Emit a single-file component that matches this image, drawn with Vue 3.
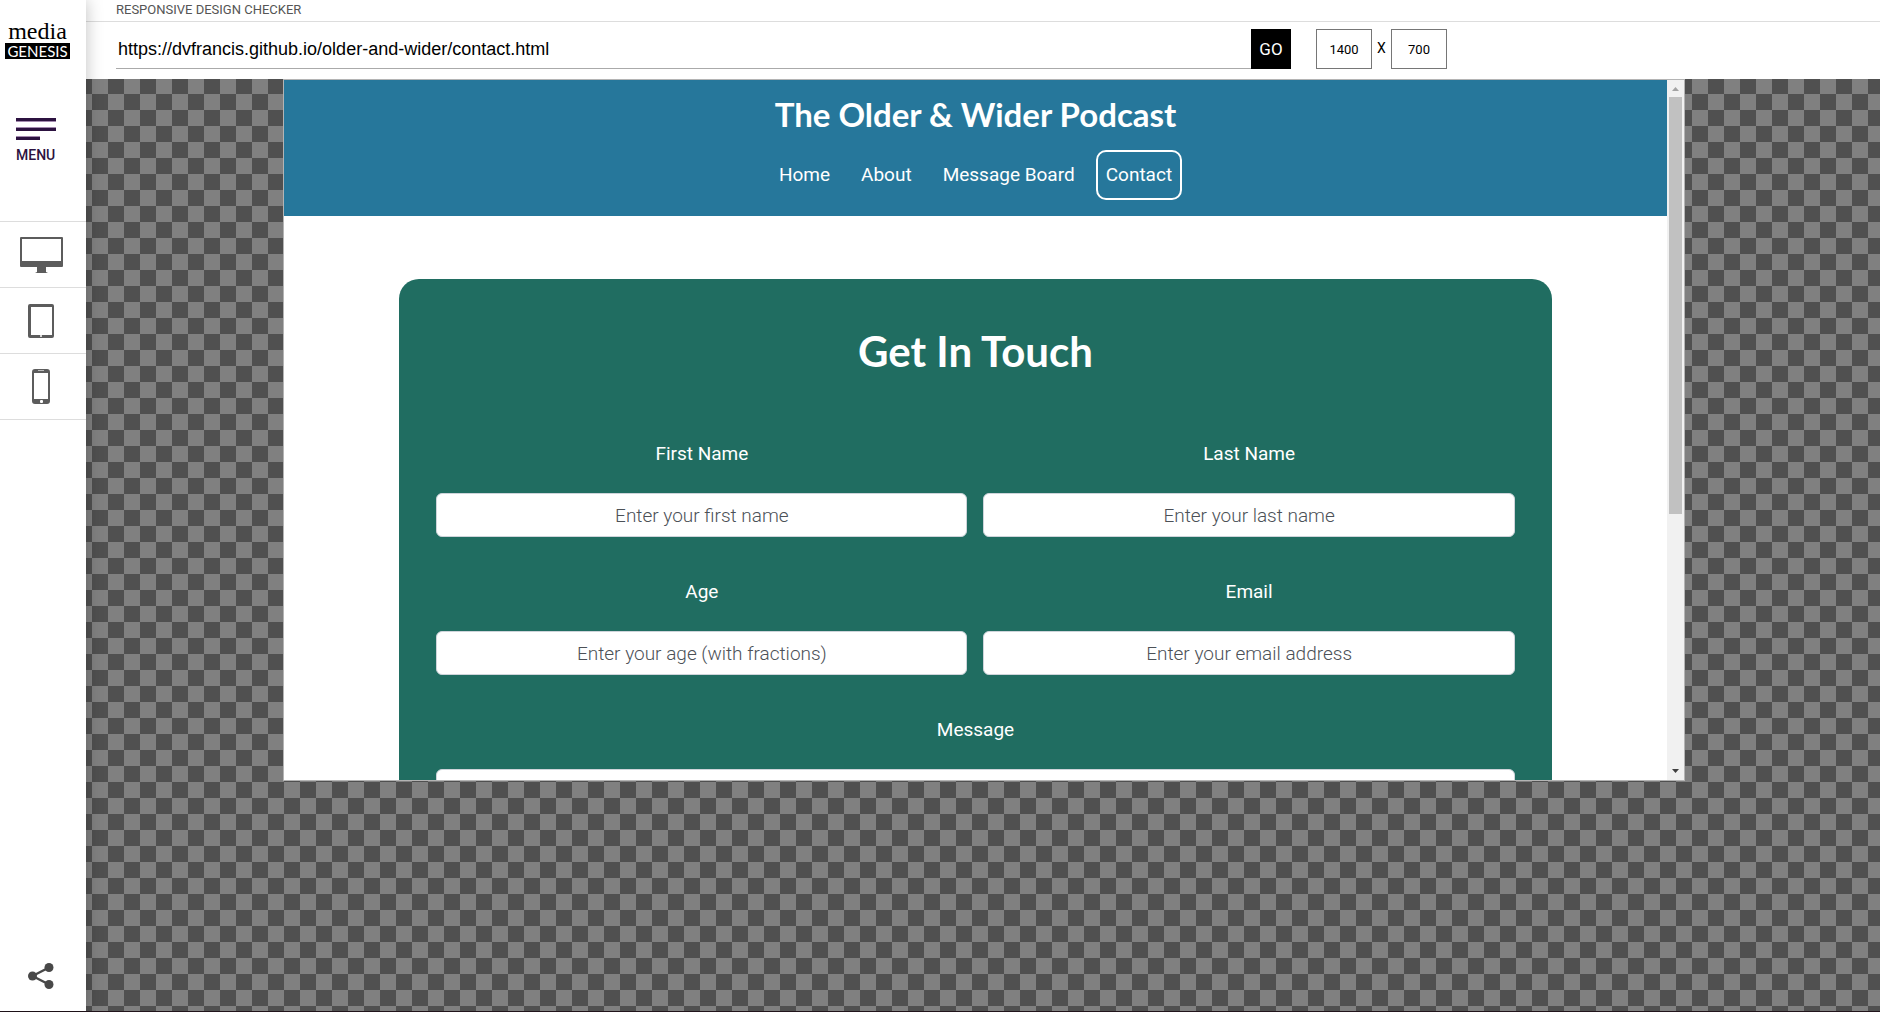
<script setup>
import { ref } from 'vue'

const url = ref('https://dvfrancis.github.io/older-and-wider/contact.html')
const viewWidth = ref('1400')
const viewHeight = ref('700')

const links = ['Home', 'About', 'Message Board', 'Contact']
const current = 'Contact'

const fields = [
  { id: 'first-name', label: 'First Name', type: 'text', hint: 'Enter your first name' },
  { id: 'last-name', label: 'Last Name', type: 'text', hint: 'Enter your last name' },
  { id: 'age', label: 'Age', type: 'text', hint: 'Enter your age (with fractions)' },
  { id: 'email', label: 'Email', type: 'email', hint: 'Enter your email address' },
]
</script>

<template>
  <div class="page">
    <aside class="sidebar">
      <a class="logo" href="#" aria-label="Media Genesis">
        <span class="logo-top">media</span>
        <span class="logo-bottom">GENESIS</span>
      </a>
      <button class="menu" type="button">
        <svg width="40" height="22" viewBox="0 0 40 22" aria-hidden="true">
          <path fill="#2c1240" d="M0 0h40v3H0zM0 10h40v3H0zM0 19h24v3H0z" />
          <path fill="#a48bb0" d="M0 3h40v1H0zM0 9h40v1H0zM0 18h24v1H0z" />
        </svg>
        <span>MENU</span>
      </button>
      <nav class="devices" aria-label="Devices">
        <button type="button" aria-label="Desktop">
          <svg width="44" height="36" viewBox="0 0 44 36">
            <path fill="#5c5c5c" fill-rule="evenodd" d="M1 0h41a1 1 0 0 1 1 1v28a1 1 0 0 1-1 1H26v5l2 1H15l2-1v-5H1a1 1 0 0 1-1-1V1a1 1 0 0 1 1-1zM2 2v22h39V2z" />
          </svg>
        </button>
        <button type="button" aria-label="Tablet">
          <svg width="44" height="34" viewBox="0 0 44 34">
            <path fill="#5c5c5c" fill-rule="evenodd" d="M10 0h22a2 2 0 0 1 2 2v30a2 2 0 0 1-2 2H10a2 2 0 0 1-2-2V2a2 2 0 0 1 2-2zM11 3v28h21V3z" />
            <circle cx="21" cy="32" r="1" fill="#fff" />
          </svg>
        </button>
        <button type="button" aria-label="Phone">
          <svg width="44" height="36" viewBox="0 0 44 36">
            <path fill="#5c5c5c" fill-rule="evenodd" d="M15 0h12a3 3 0 0 1 3 3v29a3 3 0 0 1-3 3H15a3 3 0 0 1-3-3V3a3 3 0 0 1 3-3zM14 4v26h14V4z" />
            <path fill="#bbb" d="M18 1h6v1h-6z" />
            <rect x="20" y="31" width="3" height="3" rx="1" fill="#fff" />
          </svg>
        </button>
      </nav>
      <button class="share" type="button" aria-label="Share">
        <svg width="26" height="26" viewBox="0 0 26 26">
          <path d="M4.500 13 21 4.500M4.500 13 21 21.500" stroke="#484848" stroke-width="2.500" fill="none" />
          <g fill="#484848"><circle cx="4.500" cy="13" r="4.500" /><circle cx="21" cy="4.500" r="4.500" /><circle cx="21" cy="21.500" r="4.500" /></g>
        </svg>
      </button>
    </aside>

    <div class="workspace">
      <header class="toolbar">
        <h1>RESPONSIVE DESIGN CHECKER</h1>
        <form class="controls" @submit.prevent>
          <input v-model="url" class="url" type="text" aria-label="Website address" />
          <button class="go" type="submit">GO</button>
          <input v-model="viewWidth" class="size" type="text" aria-label="Width" />
          <span class="times">X</span>
          <input v-model="viewHeight" class="size" type="text" aria-label="Height" />
        </form>
      </header>

      <main class="canvas">
        <section class="preview">
          <div class="site">
            <header class="site-header">
              <h2>The Older &amp; Wider Podcast</h2>
              <nav>
                <a v-for="link in links" :key="link" href="#" :class="{ current: link === current }">{{ link }}</a>
              </nav>
            </header>
            <form class="card" @submit.prevent>
              <h3>Get In Touch</h3>
              <div class="grid">
                <div v-for="f in fields" :key="f.id" class="field">
                  <label :for="f.id">{{ f.label }}</label>
                  <input :id="f.id" :type="f.type" :placeholder="f.hint" />
                </div>
                <div class="field wide">
                  <label for="message">Message</label>
                  <textarea id="message" rows="5"></textarea>
                </div>
              </div>
            </form>
          </div>
          <div class="scrollbar" aria-hidden="true">
            <svg width="17" height="17" viewBox="0 0 17 17"><path d="M5 11h7L8.500 7z" fill="#a3a3a3" /></svg>
            <div class="thumb"></div>
            <svg width="17" height="17" viewBox="0 0 17 17"><path d="M5 6h7L8.500 10z" fill="#404040" /></svg>
          </div>
        </section>
      </main>
    </div>
  </div>
</template>

<style>
body {
  margin: 0;
}
</style>

<style scoped>
* {
  box-sizing: border-box;
}

button {
  margin: 0;
  padding: 0;
  border: 0;
  background: none;
  font: inherit;
}

input,
textarea {
  margin: 0;
  border-radius: 0;
  outline: none;
}

svg {
  display: block;
}

.page {
  display: flex;
  min-height: 100vh;
  border-bottom: 1px solid #21141b;
  font-family: Roboto, "Liberation Sans", sans-serif;
}

.sidebar {
  position: relative;
  z-index: 1;
  display: flex;
  flex: 0 0 86px;
  flex-direction: column;
  padding: 19px 0 22px;
  background: #fff;
  box-shadow: 0 0 16px rgba(0, 0, 0, 0.25);
}

.logo {
  display: flex;
  flex-direction: column;
  width: 65px;
  margin-left: 5px;
  color: #000;
  text-align: center;
  text-decoration: none;
}

.logo-top {
  font: 24px/24px "Liberation Serif", serif;
}

.logo-bottom {
  background: #000;
  color: #fff;
  font: 15px/16px Lato, sans-serif;
}

.menu {
  display: flex;
  flex-direction: column;
  gap: 6px;
  align-self: flex-start;
  margin: 59px 0 0 16px;
  color: #2c1240;
  font-size: 14px;
  font-weight: 500;
  line-height: 18px;
  text-align: left;
}

.devices {
  display: flex;
  flex-direction: column;
  margin-top: 57px;
  border-top: 1px solid #ddd;
}

.devices button {
  display: flex;
  align-items: center;
  justify-content: center;
  height: 66px;
  padding-right: 2px;
  border-bottom: 1px solid #ddd;
}

.share {
  align-self: flex-start;
  margin: auto 0 0 28px;
}

.workspace {
  display: flex;
  flex: 1;
  flex-direction: column;
  min-width: 0;
}

.toolbar {
  height: 79px;
  background: #fff;
}

h1 {
  margin: 0;
  padding: 0 30px 2px;
  border-bottom: 1px solid #ddd;
  color: #555;
  font-size: 13px;
  font-weight: 400;
  line-height: 19px;
}

.controls {
  display: flex;
  padding: 7px 30px 0;
}

.url {
  flex: 0 1 1135px;
  min-width: 0;
  height: 40px;
  padding: 2px 2px 0;
  border: 0;
  border-bottom: 1px solid #aaa;
  background: #fff;
  color: #000;
  font: 18px "Liberation Sans", Arial, sans-serif;
}

.go {
  flex: none;
  width: 40px;
  height: 40px;
  margin-right: 25px;
  background: #000;
  color: #fff;
  font-size: 17px;
}

.size {
  width: 56px;
  height: 40px;
  padding: 0;
  border: 1px solid #767676;
  color: #000;
  font: 13px Roboto, sans-serif;
  text-align: center;
}

.times {
  width: 19px;
  font-size: 14px;
  line-height: 38px;
  text-align: center;
}

.canvas {
  flex: 1;
  padding-left: 2px;
  background: repeating-conic-gradient(#808080 0 25%, #505050 0 50%) -10px -1px / 32px 32px;
}

.preview {
  display: flex;
  max-width: 1402px;
  height: 702px;
  margin: 0 auto;
  overflow: hidden;
  border: 1px solid #b4b4b4;
  background: #fff;
}

.site {
  flex: 1;
  min-width: 0;
  overflow: hidden;
  font-family: Roboto, sans-serif;
  font-size: 19px;
  line-height: 30px;
  text-align: center;
}

.site-header {
  padding: 14px 0 16px;
  background: #26779b;
  color: #fff;
}

h2 {
  margin: 0 0 16px;
  font: 700 33px/40px Lato, sans-serif;
}

.site-header nav {
  display: flex;
  justify-content: center;
  gap: 11px;
}

.site-header a {
  padding: 8px;
  border: 2px solid transparent;
  border-radius: 10px;
  color: #fff;
  text-decoration: none;
}

.site-header .current {
  border-color: #fff;
}

.card {
  width: 83.333%;
  margin: 63px auto 0;
  padding: 48px 37px;
  border-radius: 20px;
  background: #206d61;
  color: #fff;
}

h3 {
  margin: 0 0 64px;
  font: 700 42px/48px Lato, sans-serif;
}

.grid {
  display: grid;
  grid-template-columns: 1fr 1fr;
  gap: 40px 16px;
}

.field {
  display: flex;
  flex-direction: column;
  gap: 24px;
}

.wide {
  grid-column: 1 / -1;
}

.field input,
.field textarea {
  width: 100%;
  border: 1px solid #ced4da;
  border-radius: 6px;
  background: #fff;
  color: #212529;
  font: inherit;
  text-align: center;
}

.field input {
  height: 44px;
  padding: 6px 12px;
}

.field input::placeholder {
  color: #4c5157;
  font-weight: 300;
  opacity: 1;
}

.scrollbar {
  display: flex;
  flex: 0 0 17px;
  flex-direction: column;
  background: #f1f1f1;
}

.thumb {
  height: 417px;
  margin: 0 2px auto;
  background: #c1c1c1;
}
</style>
